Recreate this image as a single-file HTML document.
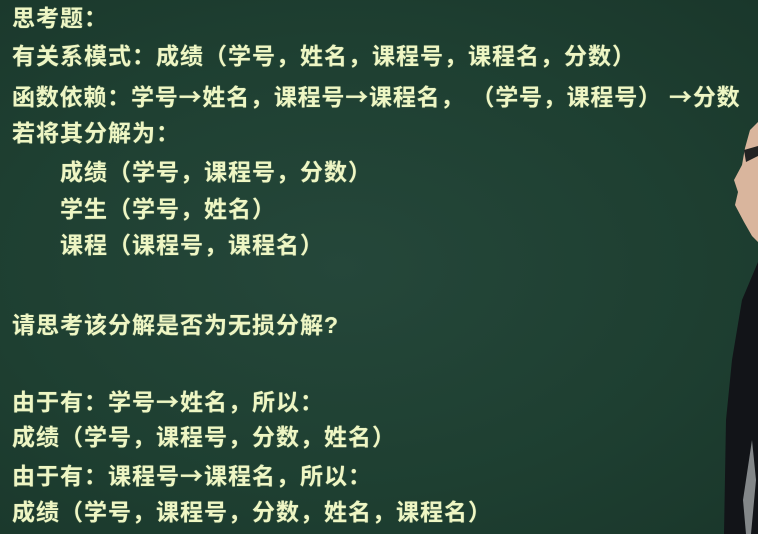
<!DOCTYPE html>
<html><head><meta charset="utf-8"><style>
html,body{margin:0;padding:0}
body{width:758px;height:534px;overflow:hidden;position:relative;background:radial-gradient(ellipse at 45% 50%,#25473a 0%,#1e3f31 60%,#1a372b 100%);}
.l{position:absolute;left:12px;font-family:"Liberation Sans","Noto Sans CJK SC",sans-serif;font-weight:bold;font-size:23px;letter-spacing:1px;line-height:30px;color:#eef6c4;white-space:nowrap;transform:translateY(-15px);text-shadow:0 0 1px rgba(230,240,180,.5)}
.i{left:60px}
.a{font-family:"Noto Sans CJK SC",sans-serif;}
</style></head><body>
<div class="l" style="top:18px">思考题：</div>
<div class="l" style="top:56px">有关系模式：成绩（学号，姓名，课程号，课程名，分数）</div>
<div class="l" style="top:95px;letter-spacing:0.8px">函数依赖：学号<span class="a">→</span>姓名，课程号<span class="a">→</span>课程名， （学号，课程号） <span class="a">→</span>分数</div>
<div class="l" style="top:133px">若将其分解为：</div>
<div class="l i" style="top:172px">成绩（学号，课程号，分数）</div>
<div class="l i" style="top:209px">学生（学号，姓名）</div>
<div class="l i" style="top:245px">课程（课程号，课程名）</div>
<div class="l" style="top:325px">请思考该分解是否为无损分解?</div>
<div class="l" style="top:400px">由于有：学号<span class="a">→</span>姓名，所以：</div>
<div class="l" style="top:437px">成绩（学号，课程号，分数，姓名）</div>
<div class="l" style="top:474px">由于有：课程号<span class="a">→</span>课程名，所以：</div>
<div class="l" style="top:512px">成绩（学号，课程号，分数，姓名，课程名）</div>
<svg style="position:absolute;left:0;top:0" width="758" height="534">
<path d="M758 122 L750 130 L745 148 L742 165 L734 180 L738 192 L735 205 L744 222 L752 236 L758 242 Z" fill="#d9b59d"/>
<path d="M744 150 L758 146 L758 156 L746 162 Z" fill="#222"/>
<path d="M758 262 L742 300 L732 360 L726 420 L724 534 L758 534 Z" fill="#121418"/>
<path d="M752 440 L743 500 L746 534 L751 534 L756 480 Z" fill="#cfd3d6" opacity=".6"/>
</svg>
</body></html>
